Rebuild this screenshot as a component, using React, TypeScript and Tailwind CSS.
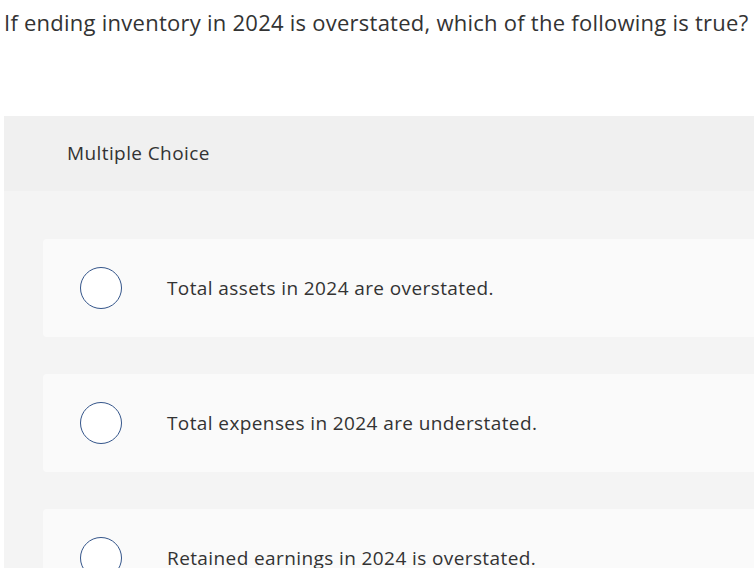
const options = [
  "Total assets in 2024 are overstated.",
  "Total expenses in 2024 are understated.",
  "Retained earnings in 2024 is overstated.",
];

export default function App() {
  return (
    <div
      className="h-[568px] w-[754px] overflow-hidden bg-white pl-1 text-[#333]"
      style={{ fontFamily: "'Open Sans', Lato, sans-serif" }}
    >
      <p className="pt-[7px] text-[22px] leading-[30px] tracking-[0.25px] whitespace-nowrap">
        If ending inventory in 2024 is overstated, which of the following is true?
      </p>

      <div className="mt-[79px] rounded-t-[3px] bg-[#f4f4f4]">
        <div className="flex h-[75px] items-center bg-[#f0f0f0] pl-[63px] text-[19px] tracking-[0.4px]">
          Multiple Choice
        </div>

        <div className="flex flex-col gap-[37px] pl-[39px] pt-[48px] pb-10">
          {options.map((text) => (
            <label
              key={text}
              className="flex h-[98px] items-center rounded-l-[4px] bg-[#fafafa]"
            >
              <span className="ml-[37px] h-[42px] w-[42px] shrink-0 rounded-full border-[1.5px] border-[#34558a] bg-white" />
              <span className="ml-[45px] text-[19px] tracking-[0.4px]">{text}</span>
            </label>
          ))}
        </div>
      </div>
    </div>
  );
}
